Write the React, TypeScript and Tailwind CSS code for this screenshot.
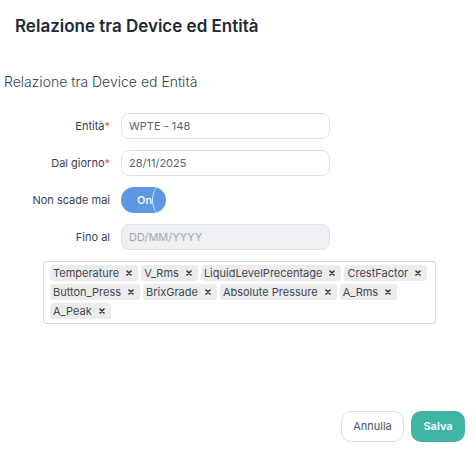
import React from "react";

const tags = [
  "Temperature",
  "V_Rms",
  "LiquidLevelPrecentage",
  "CrestFactor",
  "Button_Press",
  "BrixGrade",
  "Absolute Pressure",
  "A_Rms",
  "A_Peak",
];

const Tag = ({ label }: { label: string }) => (
  <span className="flex h-4 items-center gap-[7px] rounded-[3px] bg-[#ececec] pl-[3px] pr-[6px] text-[11px] leading-none text-[#3f4754]">
    {label}
    <svg width="6" height="6" viewBox="0 0 6 6" className="text-[#333]">
      <path d="M1 1L5 5M5 1L1 5" stroke="currentColor" strokeWidth="1.6" strokeLinecap="round" />
    </svg>
  </span>
);

const Row = ({ label, required, children }: { label: string; required?: boolean; children: React.ReactNode }) => (
  <div className="flex h-[26px] items-center">
    <div className="w-[110px] text-right text-[11px] text-[#374151]">
      {label}
      {required && <span className="text-[#f0467a]">*</span>}
    </div>
    <div className="ml-[11px]">{children}</div>
  </div>
);

export default function App() {
  return (
    <div className="flex h-[454px] w-[476px] flex-col bg-white font-['Inter',sans-serif]">
      <h1 className="pl-[15px] pt-[15px] text-[17px] font-semibold leading-[22px] text-[#1f2937]">
        Relazione tra Device ed Entità
      </h1>
      <h2 className="mt-[35px] pl-[4px] text-[14px] font-light leading-[20px] text-[#374151]">
        Relazione tra Device ed Entità
      </h2>

      <div className="mt-[21px] flex flex-col gap-[11px]">
        <Row label="Entità" required>
          <div className="flex h-[26px] w-[209px] items-center rounded-[8px] border border-[#dfe3e8] px-[7px] text-[11px] text-[#5b6270]">
            WPTE - 148
          </div>
        </Row>
        <Row label="Dal giorno" required>
          <div className="flex h-[26px] w-[209px] items-center rounded-[8px] border border-[#dfe3e8] px-[7px] text-[11px] text-[#5b6270]">
            28/11/2025
          </div>
        </Row>
        <Row label="Non scade mai">
          <div className="relative flex h-[26px] w-[45px] items-center rounded-full bg-[#5e97e3] pl-[16px]">
            <span className="text-[11px] font-medium text-white">On</span>
            <span className="absolute right-0 top-0 h-[26px] w-[14px] rounded-[50%] border-l border-white/80" />
          </div>
        </Row>
        <Row label="Fino al">
          <div className="flex h-[26px] w-[209px] items-center rounded-[8px] border border-[#dfe3e8] bg-[#eef0f4] px-[7px] text-[11px] text-[#a3a8b1]">
            DD/MM/YYYY
          </div>
        </Row>
      </div>

      <div className="ml-[43px] mt-[11px] flex h-[63px] w-[393px] flex-wrap content-start gap-x-[3px] gap-y-[3px] rounded-[3px] border border-[#d9d9d9] px-[6px] py-[3px]">
        {tags.map((t) => (
          <Tag key={t} label={t} />
        ))}
      </div>

      <div className="mt-auto flex justify-end gap-[7px] pb-[12px] pr-[11px]">
        <button className="h-[31px] w-[63px] rounded-[10px] border border-[#dde3ea] bg-white text-[11px] text-[#4b5563]">
          Annulla
        </button>
        <button className="h-[31px] w-[54px] rounded-[10px] bg-[#3fb5a6] text-[11px] font-semibold text-white">
          Salva
        </button>
      </div>
    </div>
  );
}
